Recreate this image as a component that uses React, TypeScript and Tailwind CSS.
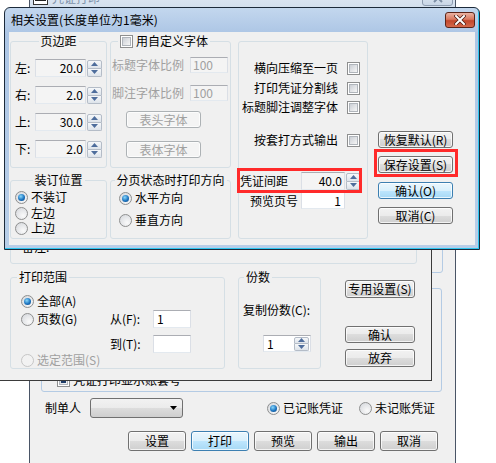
import React from "react";

type Kids = { children?: React.ReactNode; className?: string };

function Btn({
  children,
  className = "",
  kind = "normal",
}: {
  children?: React.ReactNode;
  className?: string;
  kind?: "normal" | "blue" | "disabled";
}) {
  const k =
    kind === "blue"
      ? "border-[#3c7fb1] bg-[linear-gradient(180deg,#eaf6fd_0%,#d9f0fc_50%,#bee6fd_50%,#a7d9f5_100%)] text-black"
      : kind === "disabled"
      ? "border-[#adb2b5] bg-[#f4f4f4] text-[#a0a0a0]"
      : "border-[#707070] bg-[linear-gradient(180deg,#f2f2f2_0%,#ebebeb_50%,#dddddd_50%,#cfcfcf_100%)] text-black";
  return (
    <div
      className={`flex shrink-0 items-center justify-center whitespace-nowrap rounded-[3px] border shadow-[inset_0_0_0_1px_rgba(255,255,255,0.75)] ${k} ${className}`}
    >
      {children}
    </div>
  );
}

function Check({ checked = false }: { checked?: boolean }) {
  return (
    <span className="flex h-[13px] w-[13px] shrink-0 items-center justify-center border border-[#8e8f8f] bg-white">
      <span className="flex h-[9px] w-[9px] items-center justify-center border border-[#b0b5bb] bg-[linear-gradient(135deg,#cbcfd5,#f6f6f6)]">
        {checked && <span className="block h-[5px] w-[5px] bg-[#1f3d68]" />}
      </span>
    </span>
  );
}

function Radio({ checked = false, disabled = false }: { checked?: boolean; disabled?: boolean }) {
  return (
    <span
      className={`flex h-[13px] w-[13px] shrink-0 items-center justify-center rounded-full border ${
        disabled
          ? "border-[#c6c6c6] bg-[#f2f2f2]"
          : "border-[#8e8f8f] bg-[radial-gradient(circle_at_65%_70%,#fafafa,#d2d5da)]"
      }`}
    >
      {checked && (
        <span className="block h-[7px] w-[7px] rounded-full bg-[radial-gradient(circle_at_40%_35%,#8ad8fb,#1c74c0_55%,#0b3f78)]" />
      )}
    </span>
  );
}

function Arrow({ up }: { up?: boolean }) {
  return (
    <svg width="7" height="4" viewBox="0 0 7 4">
      <path d={up ? "M0 4L3.5 0L7 4Z" : "M0 0L7 0L3.5 4Z"} fill="#4e6d9c" />
    </svg>
  );
}

function Spin({ className = "" }: { className?: string }) {
  return (
    <div className={`flex shrink-0 flex-col ${className}`}>
      <div className="flex flex-1 items-center justify-center rounded-t-[2px] border border-[#b4bcc7] bg-[linear-gradient(180deg,#f6f8fa,#dde3ea)]">
        <Arrow up />
      </div>
      <div className="flex flex-1 items-center justify-center rounded-b-[2px] border border-t-0 border-[#b4bcc7] bg-[linear-gradient(180deg,#f6f8fa,#dde3ea)]">
        <Arrow />
      </div>
    </div>
  );
}

function Box({ className = "", children, white = false }: Kids & { white?: boolean }) {
  return (
    <div
      className={`flex shrink-0 items-center border border-[#abadb3] border-x-[#dbdfe6] border-b-[#e3e9ef] ${
        white ? "bg-white" : "bg-[#f4f4f4]"
      } ${className}`}
    >
      {children}
    </div>
  );
}

function Group({
  title,
  className = "",
  titleClass = "",
  children,
}: Kids & { title?: React.ReactNode; titleClass?: string }) {
  return (
    <div className={`relative shrink-0 rounded-[3px] border border-[#d5dfe5] ${className}`}>
      {title && (
        <div
          className={`absolute top-[-8px] flex items-center whitespace-nowrap bg-[#f0f0f0] px-[2px] ${titleClass}`}
        >
          {title}
        </div>
      )}
      {children}
    </div>
  );
}

function MarginRow({ label, value }: { label: string; value: string }) {
  return (
    <div className="flex h-[18px] items-center">
      <span className="w-[20px] shrink-0">{label}</span>
      <Box className="h-[18px] w-[51px] justify-end pr-[2px]">{value}</Box>
      <Spin className="ml-[1px] h-[17px] w-[15px]" />
    </div>
  );
}

function CheckRow({ label }: { label: string }) {
  return (
    <div className="flex h-[14px] items-center justify-end gap-[9px] whitespace-nowrap pr-[7px]">
      <span>{label}</span>
      <Check />
    </div>
  );
}

function RadioRow({ label, checked, className = "" }: { label: string; checked?: boolean; className?: string }) {
  return (
    <div className={`flex h-[14px] items-center gap-[3px] whitespace-nowrap ${className}`}>
      <Radio checked={checked} />
      <span>{label}</span>
    </div>
  );
}

function FrontDialog() {
  return (
    <div className="absolute left-[4px] top-[7px] flex h-[243px] w-[476px] flex-col rounded-t-[6px] border border-[#1c2a3a] bg-[linear-gradient(180deg,#c3d7ee_0px,#adc6e5_25px,#b8cee8_100%)] shadow-[inset_-1px_-1px_0_#2ec6f0]">
      <div className="flex h-[24px] shrink-0 items-center pl-[6px] pr-[4px]">
        <span className="text-black">相关设置(长度单位为1毫米)</span>
        <div className="ml-auto flex h-[16px] w-[30px] items-center justify-center rounded-[3px] border border-[#5b2418] bg-[linear-gradient(180deg,#eab2a2_0%,#d9785f_45%,#c2472b_55%,#d4694b_100%)]">
          <svg width="12" height="10" viewBox="0 0 12 10">
            <path d="M2 1L10 9M10 1L2 9" stroke="#4a1a10" strokeWidth="3.4" strokeLinecap="square" />
            <path d="M2 1L10 9M10 1L2 9" stroke="#ffffff" strokeWidth="2" strokeLinecap="square" />
          </svg>
        </div>
      </div>
      <div className="mx-[4px] flex h-[213px] shrink-0 items-start bg-[#f0f0f0] pl-[1px] pt-[9px]">
        {/* column 1 */}
        <div className="flex w-[97px] shrink-0 flex-col">
          <Group
            title="页边距"
            titleClass="left-1/2 -translate-x-1/2"
            className="flex h-[127px] flex-col gap-[9px] pl-[4px] pt-[17px]"
          >
            <MarginRow label="左:" value="20.0" />
            <MarginRow label="右:" value="2.0" />
            <MarginRow label="上:" value="30.0" />
            <MarginRow label="下:" value="2.0" />
          </Group>
          <Group
            title="装订位置"
            titleClass="left-1/2 -translate-x-1/2"
            className="mt-[12px] flex h-[59px] flex-col pl-[4px] pt-[9px]"
          >
            <RadioRow label="不装订" checked />
            <RadioRow label="左边" className="mt-[2px]" />
            <RadioRow label="上边" className="mt-[1px]" />
          </Group>
        </div>
        {/* column 2 */}
        <div className="ml-[3px] flex w-[121px] shrink-0 flex-col">
          <Group
            title={
              <>
                <Check />
                <span className="ml-[3px]">用自定义字体</span>
              </>
            }
            titleClass="left-[7px]"
            className="flex h-[127px] flex-col pl-[1px] pt-[15px]"
          >
            <div className="flex h-[16px] items-center text-[#a0a0a0]">
              <span className="w-[78px] shrink-0 whitespace-nowrap">标题字体比例</span>
              <Box className="h-[16px] w-[38px] pl-[2px]">100</Box>
            </div>
            <div className="mt-[12px] flex h-[16px] items-center text-[#a0a0a0]">
              <span className="w-[78px] shrink-0 whitespace-nowrap">脚注字体比例</span>
              <Box className="h-[16px] w-[38px] pl-[2px]">100</Box>
            </div>
            <Btn kind="disabled" className="ml-[14px] mt-[10px] h-[17px] w-[75px]">
              表头字体
            </Btn>
            <Btn kind="disabled" className="ml-[14px] mt-[13px] h-[17px] w-[75px]">
              表体字体
            </Btn>
          </Group>
          <Group
            title="分页状态时打印方向"
            titleClass="left-1/2 -translate-x-1/2"
            className="mt-[12px] flex h-[59px] flex-col pl-[8px] pt-[10px]"
          >
            <RadioRow label="水平方向" checked />
            <RadioRow label="垂直方向" className="mt-[8px]" />
          </Group>
        </div>
        {/* group 3 */}
        <Group className="ml-[7px] flex h-[198px] w-[130px] flex-col pt-[19px]">
          <CheckRow label="横向压缩至一页" />
          <div className="mt-[6px]">
            <CheckRow label="打印凭证分割线" />
          </div>
          <div className="mt-[5px]">
            <CheckRow label="标题脚注调整字体" />
          </div>
          <div className="mt-[19px]">
            <CheckRow label="按套打方式输出" />
          </div>
          <div className="mt-[25px] flex h-[18px] items-center pl-[1px]">
            <span className="w-[61px] shrink-0">凭证间距</span>
            <Box className="h-[18px] w-[44px] justify-end pr-[2px]">40.0</Box>
            <Spin className="ml-[1px] h-[17px] w-[14px]" />
          </div>
          <div className="mt-[2px] flex h-[17px] items-center pl-[1px]">
            <span className="w-[61px] shrink-0 pr-[3px] text-right">预览页号</span>
            <Box white className="h-[17px] w-[44px] justify-end pr-[3px]">
              1
            </Box>
          </div>
        </Group>
        {/* buttons */}
        <div className="ml-[10px] flex w-[75px] shrink-0 flex-col pt-[90px]">
          <Btn className="h-[17px] w-[75px]">恢复默认(R)</Btn>
          <Btn className="mt-[8px] h-[17px] w-[75px]">保存设置(S)</Btn>
          <Btn kind="blue" className="mt-[9px] h-[17px] w-[75px]">
            确认(O)
          </Btn>
          <Btn className="mt-[8px] h-[17px] w-[75px]">取消(C)</Btn>
        </div>
      </div>
    </div>
  );
}

function MidWindow() {
  return (
    <div className="absolute left-[-10px] top-[200px] h-[181px] w-[442px] border-b border-r border-[#3b3b3b] bg-[#f0f0f0] pl-[20px] pt-[25px]">
      <Group className="h-[39px] w-[407px] pl-[11px] pt-[14px]">
        <span>备注:</span>
      </Group>
      <div className="mt-[13px] flex items-start">
        <Group title="打印范围" titleClass="left-[6px]" className="flex h-[92px] w-[215px] flex-col pl-[10px] pt-[16px]">
          <RadioRow label="全部(A)" checked />
          <div className="mt-[2px] flex h-[18px] items-center">
            <div className="flex w-[89px] shrink-0 items-center gap-[3px]">
              <Radio />
              <span>页数(G)</span>
            </div>
            <span className="w-[43px] shrink-0 whitespace-nowrap">从(F):</span>
            <Box white className="h-[18px] w-[38px] pl-[3px]">
              1
            </Box>
          </div>
          <div className="mt-[7px] flex h-[18px] items-center pl-[89px]">
            <span className="w-[43px] shrink-0 whitespace-nowrap">到(T):</span>
            <Box white className="h-[18px] w-[38px]" />
          </div>
          <div className="flex h-[14px] items-center gap-[3px] whitespace-nowrap text-[#a0a0a0]">
            <Radio disabled />
            <span>选定范围(S)</span>
          </div>
        </Group>
        <Group title="份数" titleClass="left-[5px]" className="ml-[13px] flex h-[92px] w-[83px] flex-col pl-[4px] pt-[25px]">
          <span className="h-[14px] whitespace-nowrap">复制份数(C):</span>
          <Box white className="ml-[20px] mt-[18px] h-[17px] w-[48px] justify-between pl-[3px] pr-[1px]">
            <span>1</span>
            <Spin className="h-[14px] w-[15px]" />
          </Box>
        </Group>
        <div className="ml-[24px] flex w-[70px] shrink-0 flex-col pt-[3px]">
          <Btn className="h-[18px] w-[70px]">专用设置(S)</Btn>
          <Btn className="mt-[28px] h-[17px] w-[70px]">确认</Btn>
          <Btn className="mt-[6px] h-[18px] w-[70px]">放弃</Btn>
        </div>
      </div>
    </div>
  );
}

function BackWindow() {
  return (
    <div className="absolute left-[29px] top-[-14px] flex h-[490px] w-[427px] flex-col border border-[#4a5566] bg-[#f0f0f0]">
      <div className="flex h-[21px] shrink-0 items-center bg-[linear-gradient(180deg,#e4ecf6,#d3dfed)] pl-[3px] pr-[2px]">
        <span className="flex h-[15px] w-[15px] items-center justify-center border border-[#333] bg-white">
          <svg width="11" height="9" viewBox="0 0 11 9">
            <rect x="0" y="1" width="11" height="7" fill="#222" />
            <rect x="2" y="3" width="3" height="3" fill="#fff" />
            <rect x="7" y="3" width="2" height="3" fill="#fff" />
          </svg>
        </span>
        <span className="ml-[4px] text-[#8093ab]">凭证打印</span>
        <div className="ml-auto flex h-[17px] w-[31px] items-center justify-center rounded-[3px] border border-[#8d9cb0] bg-[linear-gradient(180deg,#e6eef7,#c9d6e6)]">
          <svg width="12" height="10" viewBox="0 0 12 10">
            <path d="M2 1L10 9M10 1L2 9" stroke="#7d8ea5" strokeWidth="2" />
          </svg>
        </div>
      </div>
      <div className="flex flex-col pl-[11px]">
        <div className="mt-[32px] h-[233px] w-[402px] rounded-[3px] border border-[#b4cbe4]" />
        <div className="mt-[15px] h-[104px] w-[401px] rounded-[3px] border border-[#b4cbe4] pl-[15px] pt-[84px]">
          <div className="flex h-[14px] items-center gap-[3px]">
            <Check checked />
            <span>凭证打印显示账套号</span>
          </div>
        </div>
        <div className="mt-[6px] flex h-[20px] items-center pl-[4px]">
          <span className="w-[45px] shrink-0">制单人</span>
          <div className="flex h-[20px] w-[93px] shrink-0 items-center justify-end rounded-[3px] border border-[#707070] bg-[linear-gradient(180deg,#f2f2f2_0%,#ebebeb_50%,#dddddd_50%,#cfcfcf_100%)] pr-[5px]">
            <svg width="7" height="4" viewBox="0 0 7 4">
              <path d="M0 0L7 0L3.5 4Z" fill="#000" />
            </svg>
          </div>
          <div className="ml-[84px] flex items-center gap-[3px]">
            <Radio checked />
            <span>已记账凭证</span>
          </div>
          <div className="ml-[16px] flex items-center gap-[3px]">
            <Radio />
            <span>未记账凭证</span>
          </div>
        </div>
        <div className="mt-[13px] flex h-[20px] gap-[5px] pl-[87px]">
          <Btn className="h-[20px] w-[58px]">设置</Btn>
          <Btn kind="blue" className="h-[20px] w-[58px]">
            打印
          </Btn>
          <Btn className="h-[20px] w-[58px]">预览</Btn>
          <Btn className="h-[20px] w-[58px]">输出</Btn>
          <Btn className="h-[20px] w-[58px]">取消</Btn>
        </div>
      </div>
    </div>
  );
}

export default function App() {
  return (
    <div className="relative h-[463px] w-[496px] overflow-hidden bg-white font-['Noto_Sans_CJK_SC','Noto_Sans',sans-serif] text-[12px] leading-[14px] text-black">
      <BackWindow />
      <MidWindow />
      <FrontDialog />
      <div className="absolute left-[237px] top-[168px] h-[25px] w-[125px] border-[3px] border-[#ff2a2a]" />
      <div className="absolute left-[374px] top-[149px] h-[28px] w-[84px] border-[3px] border-[#ff2a2a]" />
    </div>
  );
}
